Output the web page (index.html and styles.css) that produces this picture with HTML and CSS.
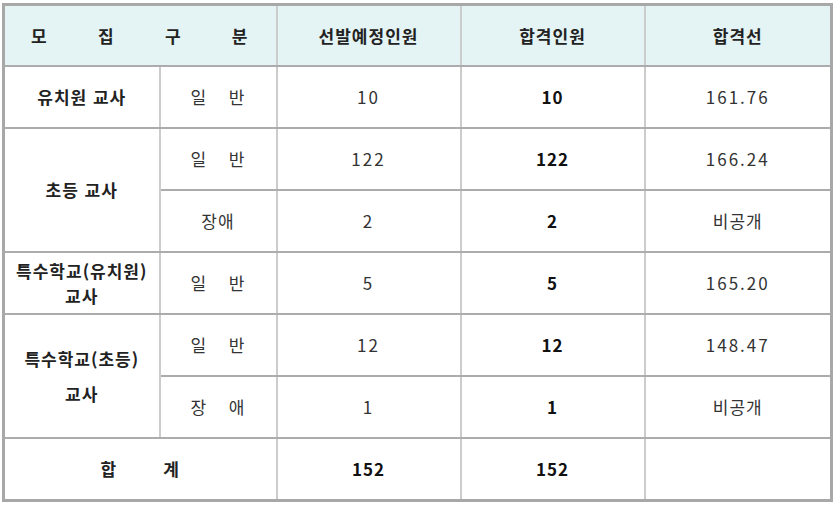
FILE: index.html
```html
<!DOCTYPE html>
<html lang="ko">
<head>
<meta charset="utf-8">
<title>합격선</title>
<link rel="stylesheet" href="styles.css">
</head>
<body>
<table class="result">
  <colgroup>
    <col class="c1"><col class="c2"><col class="c3"><col class="c4"><col class="c5">
  </colgroup>
  <thead>
    <tr class="head">
      <th colspan="2"><div class="spread"><span>모</span><span>집</span><span>구</span><span>분</span></div></th>
      <th>선발예정인원</th>
      <th>합격인원</th>
      <th>합격선</th>
    </tr>
  </thead>
  <tbody>
    <tr>
      <td class="cat">유치원 교사</td>
      <td class="sub">일 반</td>
      <td class="num">10</td>
      <td class="b">10</td>
      <td class="num">161.76</td>
    </tr>
    <tr>
      <td class="cat" rowspan="2">초등 교사</td>
      <td class="sub">일 반</td>
      <td class="num">122</td>
      <td class="b">122</td>
      <td class="num">166.24</td>
    </tr>
    <tr>
      <td class="sub2">장애</td>
      <td class="num">2</td>
      <td class="b">2</td>
      <td class="txt">비공개</td>
    </tr>
    <tr>
      <td class="cat tight">특수학교(유치원)<br>교사</td>
      <td class="sub">일 반</td>
      <td class="num">5</td>
      <td class="b">5</td>
      <td class="num">165.20</td>
    </tr>
    <tr>
      <td class="cat loose" rowspan="2">특수학교(초등)<br>교사</td>
      <td class="sub">일 반</td>
      <td class="num">12</td>
      <td class="b">12</td>
      <td class="num">148.47</td>
    </tr>
    <tr>
      <td class="sub">장 애</td>
      <td class="num">1</td>
      <td class="b">1</td>
      <td class="txt">비공개</td>
    </tr>
    <tr class="total">
      <td colspan="2" class="cat"><div class="spread2"><span>합</span><span>계</span></div></td>
      <td class="b">152</td>
      <td class="b">152</td>
      <td></td>
    </tr>
  </tbody>
</table>
</body>
</html>
```
FILE: styles.css
```css
html, body {
  margin: 0;
  padding: 0;
  background: #ffffff;
}
body {
  padding: 3px 0 0 2px;
  font-family: "Noto Sans CJK KR", "Noto Sans", sans-serif;
  font-size: 17px;
  color: #333333;
}
.result {
  border-collapse: collapse;
  table-layout: fixed;
  width: 828px;
  border: 3px solid #a8a8a8;
}
.c1 { width: 156px; }
.c2 { width: 117px; }
.c3 { width: 184px; }
.c4 { width: 184px; }
.c5 { width: 187px; }
.result th,
.result td {
  border-left: 2px solid #cccccc;
  border-right: 2px solid #cccccc;
  border-top: 2px solid #acacac;
  border-bottom: 2px solid #acacac;
  text-align: center;
  vertical-align: middle;
  padding: 0;
  line-height: 20px;
  letter-spacing: 1px;
}
.head th {
  height: 59px;
  background: #e4f3f3;
  font-weight: bold;
  color: #222222;
}
.result tbody tr { height: 62px; }
.spread {
  display: flex;
  justify-content: space-between;
  padding: 0 27px 0 26px;
}
.spread2 {
  display: flex;
  justify-content: center;
  gap: 46px;
}
.cat {
  font-weight: bold;
  color: #222222;
}
.tight { line-height: 25px !important; }
.loose { line-height: 35px !important; }
.b {
  font-weight: bold;
  color: #111111;
}
.num {
  letter-spacing: 2px !important;
}
.sub {
  word-spacing: 16px;
  color: #333333;
}
.sub2 { color: #333333; }
.txt { color: #333333; }
```
